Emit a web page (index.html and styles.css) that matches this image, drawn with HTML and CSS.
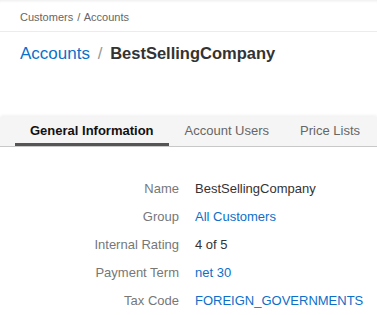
FILE: index.html
```html
<!DOCTYPE html>
<html>
<head>
    <title>BestSellingCompany - Accounts</title>
    <link rel="stylesheet" href="styles.css">
</head>
<body>
    <div class="page">
        <div class="breadcrumbs">Customers <span class="crumb-sep">/</span> Accounts</div>
        <div class="page-title">
            <a href="#" class="title-link">Accounts</a>
            <span class="title-sep">/</span>
            <span class="title-name">BestSellingCompany</span>
        </div>
        <div class="tabs">
            <div class="tab active">General Information</div>
            <div class="tab">Account Users</div>
            <div class="tab">Price Lists</div>
        </div>
        <div class="details">
            <div class="row">
                <div class="label">Name</div>
                <div class="value">BestSellingCompany</div>
            </div>
            <div class="row">
                <div class="label">Group</div>
                <div class="value"><a href="#">All Customers</a></div>
            </div>
            <div class="row">
                <div class="label">Internal Rating</div>
                <div class="value">4 of 5</div>
            </div>
            <div class="row">
                <div class="label">Payment Term</div>
                <div class="value"><a href="#">net 30</a></div>
            </div>
            <div class="row">
                <div class="label">Tax Code</div>
                <div class="value"><a href="#">FOREIGN_GOVERNMENTS</a></div>
            </div>
        </div>
    </div>
</body>
</html>
```

FILE: styles.css
```css
body {
    margin: 0;
    font-family: "Liberation Sans", Arial, sans-serif;
    color: #333;
    background-color: #fff;
}
a {
    color: #0c6fc9;
    text-decoration: none;
}
.page {
    box-shadow: inset 0 3px 3px -2px rgba(0, 0, 0, 0.08);
    min-height: 315px;
}
.breadcrumbs {
    font-size: 11px;
    color: #666;
    padding: 11px 20px 8px;
    border-bottom: 1px solid #ececec;
}
.crumb-sep {
    margin: 0 1px;
}
.page-title {
    padding: 10px 20px 0;
    font-size: 17px;
    line-height: 22px;
}
.title-sep {
    color: #999;
    margin: 0 3px;
}
.title-name {
    font-weight: bold;
    font-size: 16.5px;
    color: #333;
}
.tabs {
    display: flex;
    margin-top: 52px;
    padding-left: 15px;
    background-color: #f5f5f5;
    border-bottom: 1px solid #c8c8c8;
    box-shadow: 0 -2px 3px rgba(0, 0, 0, 0.05);
    border-radius: 3px 0 0 0;
}
.tab {
    font-size: 13px;
    color: #666;
    padding: 6px 15px 4px;
    line-height: 16px;
    border-bottom: 3px solid transparent;
}
.tab + .tab {
    padding-left: 16px;
}
.tab.active {
    font-weight: bold;
    color: #111;
    border-bottom-color: #555;
}
.details {
    padding-top: 34px;
    font-size: 13px;
}
.row {
    display: flex;
    line-height: 16px;
    margin-bottom: 12px;
}
.label {
    width: 179px;
    text-align: right;
    color: #777;
}
.value {
    padding-left: 16px;
}
```
